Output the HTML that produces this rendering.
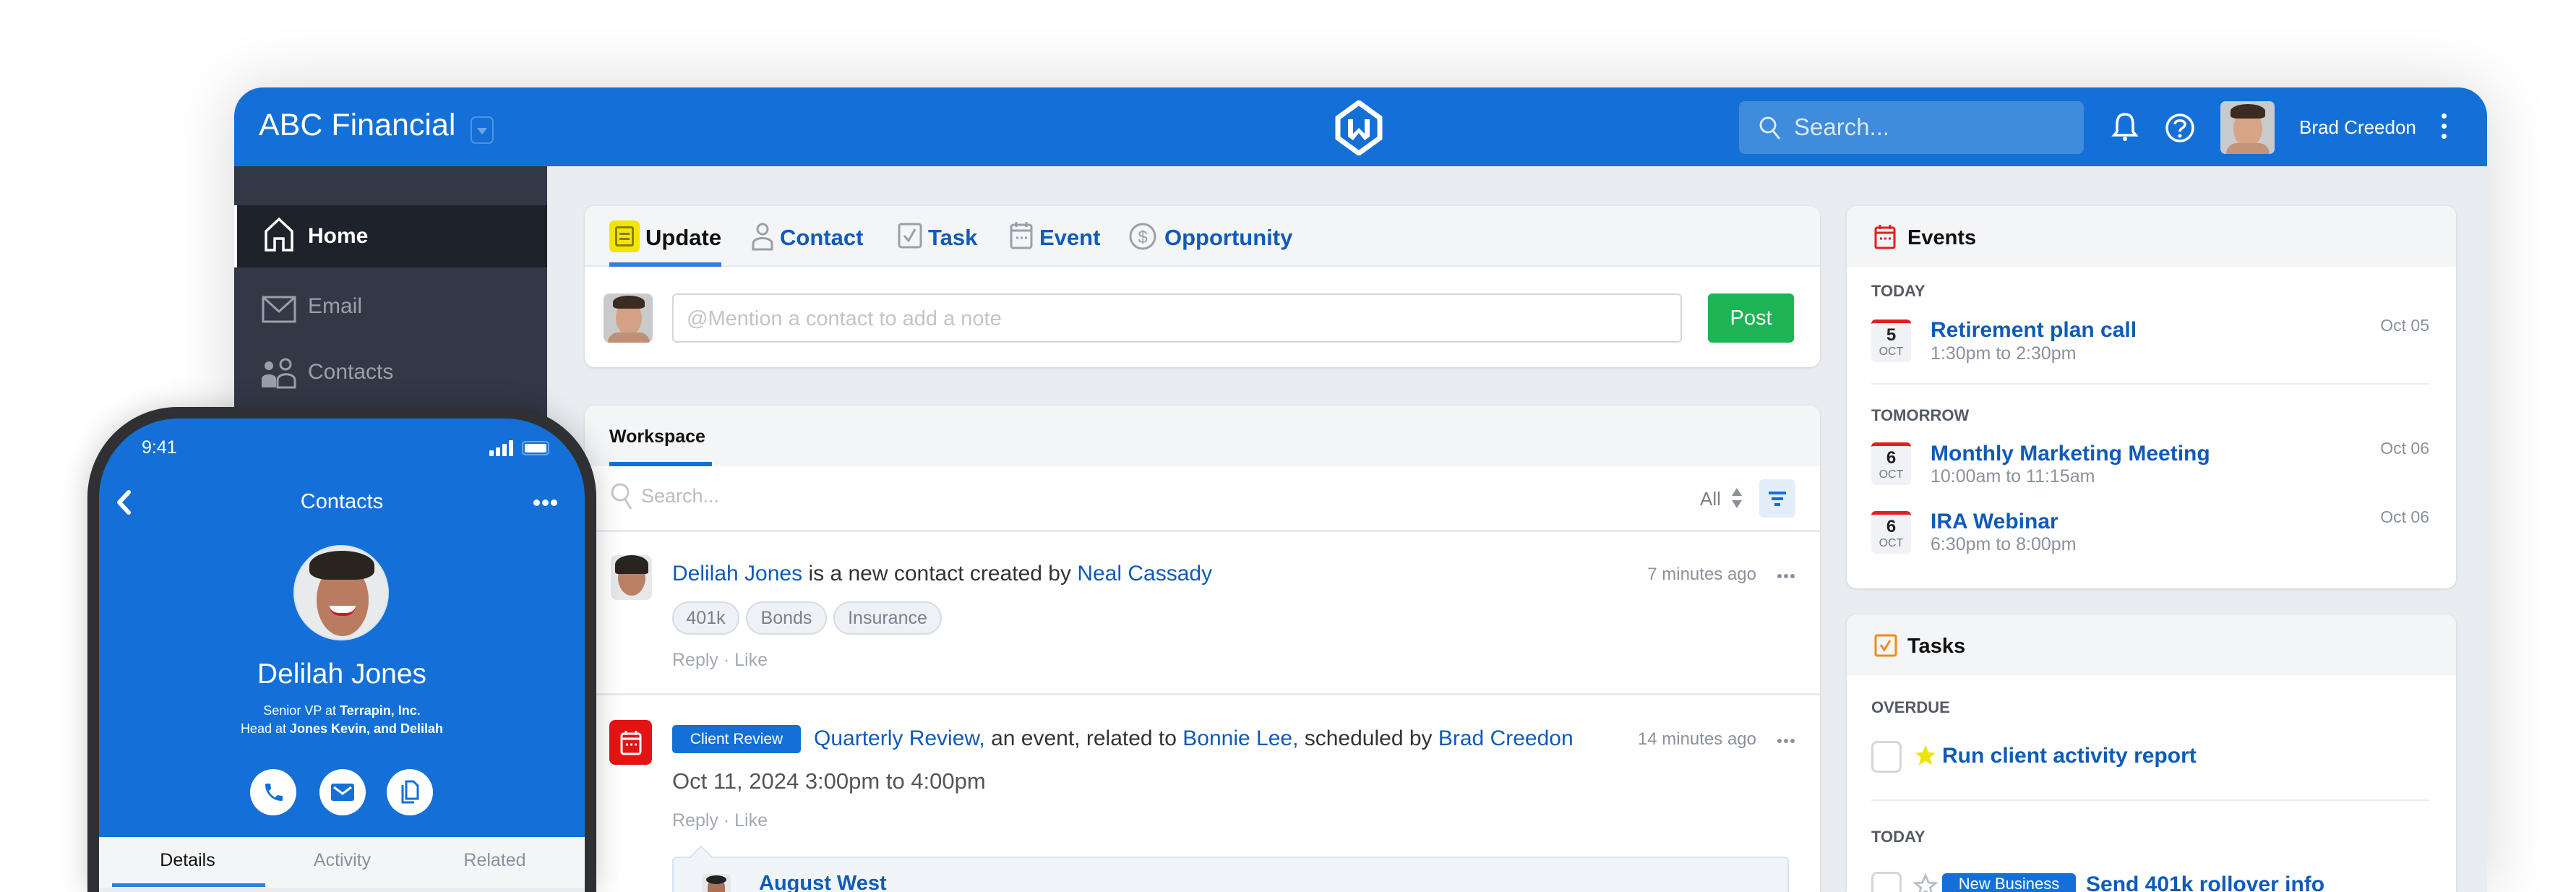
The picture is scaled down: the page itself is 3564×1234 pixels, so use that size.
<!DOCTYPE html>
<html style="width:3564px;height:1234px;overflow:hidden"><head><meta charset="utf-8">
<style>
*{box-sizing:border-box;margin:0;padding:0}
body{width:3564px;height:1234px;background:#fff;position:relative;overflow:hidden;font-family:"Liberation Sans",sans-serif}
.a{position:absolute}
.win{left:324px;top:121px;width:3117px;height:1113px;border-radius:40px 40px 0 0;background:#e9edf1;overflow:hidden;box-shadow:0 0 90px rgba(0,0,0,.16)}
.hdr{left:0;top:0;width:3117px;height:109px;background:#1470d6}
.side{left:0;top:109px;width:433px;height:1004px;background:#323846}
.card{background:#fff;border-radius:14px;box-shadow:0 1px 4px rgba(0,0,0,.12);overflow:hidden}
.ch{background:#f4f5f7}
.lk{color:#0f5bb8}
.gr{color:#8a919b}
.t{white-space:nowrap}
.tag{position:absolute;top:271px;height:46px;border:2px solid #d8dde3;background:#eef1f5;border-radius:23px;color:#7a818b;font-size:25px;line-height:42px;text-align:center}
.cal{position:absolute;left:34px;width:55px;height:59px;background:#f0f2f5;border-top:5px solid #e0201e;border-radius:6px;text-align:center}
.cal b{display:block;font-size:24px;color:#222;line-height:28px;margin-top:3px}
.cal i{display:block;font-style:normal;font-size:16px;color:#777;line-height:18px}
.sec{position:absolute;left:34px;font-size:22px;font-weight:bold;color:#555b65}
.et{position:absolute;left:116px;font-size:30px;font-weight:bold;color:#0f5bb8;white-space:nowrap}
.es{position:absolute;left:116px;font-size:25px;color:#8a919b;white-space:nowrap}
.ed{position:absolute;right:37px;font-size:23px;color:#8a919b}
.cb{position:absolute;left:34px;width:42px;height:44px;border:3px solid #d3d7dc;border-radius:8px;background:#fff}
.face{position:absolute;overflow:hidden;background:#c8cacc}
</style></head><body>

<div class="a win">
  <div class="a hdr">
    <div class="a t" style="left:34px;top:28px;font-size:43px;color:#fff">ABC Financial</div>
    <div class="a" style="left:327px;top:40px;width:32px;height:38px;border:2px solid #4d93e2;border-radius:7px"><div class="a" style="left:7px;top:14px;border-left:7px solid transparent;border-right:7px solid transparent;border-top:9px solid #6aa6ea"></div></div>
    <svg class="a" style="left:1521px;top:18px" width="70" height="76" viewBox="0 0 70 76"><path d="M35 3 L64 24 L64 52 L35 73 L6 52 L6 24 Z" fill="none" stroke="#fff" stroke-width="7"/><path d="M20 26 V50 L27 55 L35 45 L43 55 L50 50 V26 H43 V46 L35 38 L27 46 V26 Z" fill="#fff"/></svg>
    <div class="a" style="left:2082px;top:19px;width:477px;height:73px;background:#3f8bdc;border-radius:8px"></div>
    <svg class="a" style="left:2108px;top:38px" width="34" height="36" viewBox="0 0 34 36"><circle cx="14" cy="14" r="10" fill="none" stroke="#dbe8f8" stroke-width="3"/><path d="M21 22 L30 33" stroke="#dbe8f8" stroke-width="3"/></svg>
    <div class="a t" style="left:2158px;top:36px;font-size:33px;color:#dbe8f8">Search...</div>
    <svg class="a" style="left:2596px;top:33px" width="40" height="44" viewBox="0 0 40 44"><path d="M20 4 C11 4 9 11 9 18 V28 L5 33 H35 L31 28 V18 C31 11 29 4 20 4 Z" fill="none" stroke="#fff" stroke-width="3.5"/><circle cx="20" cy="38" r="3" fill="#fff"/></svg>
    <svg class="a" style="left:2670px;top:34px" width="44" height="44" viewBox="0 0 44 44"><circle cx="22" cy="22" r="18" fill="none" stroke="#fff" stroke-width="3.5"/><path d="M15 17 C15 10 29 10 29 17 C29 22 22 22 22 27" fill="none" stroke="#fff" stroke-width="3.5"/><circle cx="22" cy="33" r="2.5" fill="#fff"/></svg>
    <div class="face" style="left:2748px;top:19px;width:75px;height:73px;border-radius:7px"><div class="a" style="left:18px;top:12px;width:40px;height:52px;border-radius:50%;background:#d7a486"></div><div class="a" style="left:14px;top:4px;width:48px;height:20px;border-radius:50% 50% 20% 20%;background:#3b2b22"></div><div class="a" style="left:8px;top:58px;width:60px;height:15px;border-radius:30px 30px 0 0;background:#c49478"></div></div>
    <div class="a t" style="left:2857px;top:40px;font-size:26px;color:#fff">Brad Creedon</div>
    <div class="a" style="left:3054px;top:36px;width:7px;height:7px;border-radius:50%;background:#fff;box-shadow:0 14px 0 #fff,0 28px 0 #fff"></div>
  </div>

  <div class="a side">
    <div class="a" style="left:0;top:54px;width:433px;height:86px;background:#1e222b;border-left:4px solid #fff"></div>
    <svg class="a" style="left:40px;top:70px" width="44" height="50" viewBox="0 0 44 50"><path d="M4 46 V20 L22 3 L40 20 V46 H28 V30 H16 V46 Z" fill="none" stroke="#fff" stroke-width="3.5"/></svg>
    <div class="a t" style="left:102px;top:80px;font-size:30px;font-weight:bold;color:#fff">Home</div>
    <svg class="a" style="left:38px;top:179px" width="48" height="38" viewBox="0 0 48 38"><rect x="2" y="2" width="44" height="34" fill="none" stroke="#9aa0a8" stroke-width="3"/><path d="M2 2 L24 22 L46 2" fill="none" stroke="#9aa0a8" stroke-width="3"/></svg>
    <div class="a t" style="left:102px;top:177px;font-size:30px;color:#9aa0a8">Email</div>
    <svg class="a" style="left:38px;top:264px" width="50" height="44" viewBox="0 0 50 44"><circle cx="10" cy="12" r="6" fill="#9aa0a8"/><path d="M0 42 V30 C0 22 20 22 20 30 V42 Z" fill="#9aa0a8"/><circle cx="33" cy="10" r="7" fill="none" stroke="#9aa0a8" stroke-width="3"/><path d="M22 42 V32 C22 21 46 21 46 32 V42 Z" fill="none" stroke="#9aa0a8" stroke-width="3"/></svg>
    <div class="a t" style="left:102px;top:268px;font-size:30px;color:#9aa0a8">Contacts</div>
  </div>

  <!-- compose -->
  <div class="a card" style="left:485px;top:164px;width:1709px;height:223px">
    <div class="a ch" style="left:0;top:0;width:1709px;height:84px;border-bottom:2px solid #e6e9ed"></div>
    <div class="a" style="left:34px;top:78px;width:155px;height:6px;background:#2b7de0"></div>
    <div class="a" style="left:34px;top:20px;width:42px;height:44px;background:#f2e600;border-radius:7px"><div class="a" style="left:8px;top:8px;width:26px;height:28px;border:3px solid #8a7d00;border-radius:3px"></div><div class="a" style="left:14px;top:17px;width:14px;height:3px;background:#8a7d00;box-shadow:0 7px 0 #8a7d00"></div></div>
    <div class="a t" style="left:84px;top:26px;font-size:31px;font-weight:bold;color:#111">Update</div>
    <svg class="a" style="left:230px;top:22px" width="32" height="40" viewBox="0 0 32 40"><circle cx="16" cy="10" r="7" fill="none" stroke="#9aa0a8" stroke-width="3"/><path d="M3 38 V30 C3 20 29 20 29 30 V38 Z" fill="none" stroke="#9aa0a8" stroke-width="3"/></svg>
    <div class="a t lk" style="left:270px;top:26px;font-size:31px;font-weight:bold">Contact</div>
    <svg class="a" style="left:433px;top:22px" width="34" height="38" viewBox="0 0 34 38"><rect x="2" y="3" width="30" height="32" rx="3" fill="none" stroke="#9aa0a8" stroke-width="3"/><path d="M9 19 L15 26 L24 10" fill="none" stroke="#9aa0a8" stroke-width="3"/></svg>
    <div class="a t lk" style="left:475px;top:26px;font-size:31px;font-weight:bold">Task</div>
    <svg class="a" style="left:588px;top:20px" width="32" height="40" viewBox="0 0 32 40"><rect x="2" y="6" width="28" height="32" rx="3" fill="none" stroke="#9aa0a8" stroke-width="3"/><path d="M2 14 H30 M9 2 V9 M23 2 V9" stroke="#9aa0a8" stroke-width="3"/><path d="M9 24 H12 M15 24 H18 M21 24 H24" stroke="#9aa0a8" stroke-width="3"/></svg>
    <div class="a t lk" style="left:629px;top:26px;font-size:31px;font-weight:bold">Event</div>
    <svg class="a" style="left:752px;top:22px" width="40" height="40" viewBox="0 0 40 40"><circle cx="20" cy="20" r="17" fill="none" stroke="#9aa0a8" stroke-width="3"/><text x="20" y="29" font-family="Liberation Sans" font-size="24" fill="#9aa0a8" text-anchor="middle">$</text></svg>
    <div class="a t lk" style="left:802px;top:26px;font-size:31px;font-weight:bold">Opportunity</div>
    <div class="face" style="left:26px;top:121px;width:68px;height:68px;border-radius:8px"><div class="a" style="left:17px;top:10px;width:36px;height:48px;border-radius:50%;background:#d4a184"></div><div class="a" style="left:13px;top:3px;width:44px;height:18px;border-radius:50% 50% 20% 20%;background:#3b2b22"></div><div class="a" style="left:6px;top:54px;width:58px;height:14px;border-radius:30px 30px 0 0;background:#c08f74"></div></div>
    <div class="a" style="left:121px;top:121px;width:1397px;height:68px;border:2px solid #d3d7dc;border-radius:6px"></div>
    <div class="a t" style="left:141px;top:140px;font-size:29px;color:#c1c5cb">@Mention a contact to add a note</div>
    <div class="a" style="left:1554px;top:121px;width:119px;height:68px;background:#1cb454;border-radius:6px;color:#fff;font-size:29px;line-height:68px;text-align:center">Post</div>
  </div>

  <!-- workspace -->
  <div class="a card" style="left:485px;top:440px;width:1709px;height:673px;border-radius:14px 14px 0 0">
    <div class="a ch" style="left:0;top:0;width:1709px;height:84px"></div>
    <div class="a t" style="left:34px;top:29px;font-size:25px;font-weight:bold;color:#111">Workspace</div>
    <div class="a" style="left:34px;top:78px;width:142px;height:6px;background:#1470d6"></div>
    <svg class="a" style="left:34px;top:105px" width="36" height="42" viewBox="0 0 36 42"><circle cx="15" cy="15" r="11" fill="none" stroke="#c4c8ce" stroke-width="3"/><path d="M22 25 L30 38" stroke="#c4c8ce" stroke-width="3"/></svg>
    <div class="a t" style="left:78px;top:110px;font-size:27px;color:#b8bdc4">Search...</div>
    <div class="a t" style="left:1543px;top:114px;font-size:26px;color:#7a818b">All</div>
    <svg class="a" style="left:1585px;top:112px" width="18" height="32" viewBox="0 0 18 32"><path d="M9 2 L16 13 H2 Z M9 30 L16 19 H2 Z" fill="#8a919b"/></svg>
    <div class="a" style="left:1625px;top:102px;width:50px;height:53px;background:#e3eefb;border-radius:6px"><div class="a" style="left:13px;top:17px;width:24px;height:4px;background:#1470d6"></div><div class="a" style="left:17px;top:25px;width:16px;height:4px;background:#1470d6"></div><div class="a" style="left:21px;top:33px;width:8px;height:4px;background:#1470d6"></div></div>
    <div class="a" style="left:0;top:172px;width:1709px;height:3px;background:#e8ebef"></div>

    <div class="face" style="left:36px;top:207px;width:57px;height:62px;border-radius:8px;background:#e6e8ea"><div class="a" style="left:10px;top:6px;width:38px;height:50px;border-radius:50%;background:#b98064"></div><div class="a" style="left:6px;top:0;width:46px;height:26px;border-radius:50% 50% 10% 10%;background:#2a2420"></div></div>
    <div class="a t" style="left:121px;top:216px;font-size:30px;color:#333"><span class="lk">Delilah Jones</span> is a new contact created by <span class="lk">Neal Cassady</span></div>
    <div class="a t gr" style="right:88px;top:220px;font-size:24px">7 minutes ago</div>
    <div class="a" style="left:1650px;top:233px;width:6px;height:6px;border-radius:50%;background:#8a919b;box-shadow:9px 0 0 #8a919b,18px 0 0 #8a919b"></div>
    <div class="tag" style="left:121px;width:93px">401k</div>
    <div class="tag" style="left:223px;width:112px">Bonds</div>
    <div class="tag" style="left:344px;width:150px">Insurance</div>
    <div class="a t" style="left:121px;top:338px;font-size:25px;color:#a3a9b1">Reply · Like</div>
    <div class="a" style="left:0;top:398px;width:1709px;height:3px;background:#e8ebef"></div>

    <div class="a" style="left:34px;top:435px;width:59px;height:62px;background:#e41414;border-radius:8px"><svg class="a" style="left:15px;top:13px" width="30" height="36" viewBox="0 0 30 36"><rect x="2" y="6" width="26" height="28" rx="3" fill="none" stroke="#fff" stroke-width="3"/><path d="M2 13 H28 M8 2 V8 M22 2 V8 M8 21 H11 M14 21 H17 M20 21 H23" stroke="#fff" stroke-width="3"/></svg></div>
    <div class="a" style="left:121px;top:442px;width:178px;height:39px;background:#1470d6;border-radius:5px;color:#fff;font-size:21px;line-height:39px;text-align:center">Client Review</div>
    <div class="a t" style="left:317px;top:444px;font-size:30px;color:#333"><span class="lk">Quarterly Review,</span> an event, related to <span class="lk">Bonnie Lee,</span> scheduled by <span class="lk">Brad Creedon</span></div>
    <div class="a t gr" style="right:88px;top:448px;font-size:24px">14 minutes ago</div>
    <div class="a" style="left:1650px;top:461px;width:6px;height:6px;border-radius:50%;background:#8a919b;box-shadow:9px 0 0 #8a919b,18px 0 0 #8a919b"></div>
    <div class="a t" style="left:121px;top:502px;font-size:31px;color:#555">Oct 11, 2024 3:00pm to 4:00pm</div>
    <div class="a t" style="left:121px;top:560px;font-size:25px;color:#a3a9b1">Reply · Like</div>
    <div class="a" style="left:121px;top:624px;width:1545px;height:49px;background:#f1f5fa;border:2px solid #d6e3f2;border-bottom:none;border-radius:6px 6px 0 0"></div>
    <div class="a" style="left:150px;top:613px;width:22px;height:22px;background:#f1f5fa;border-left:2px solid #d6e3f2;border-top:2px solid #d6e3f2;transform:rotate(45deg)"></div>
    <div class="face" style="left:162px;top:648px;width:40px;height:25px;border-radius:6px 6px 0 0;background:#e6e8ea"><div class="a" style="left:8px;top:6px;width:24px;height:19px;border-radius:12px 12px 0 0;background:#a87158"></div><div class="a" style="left:6px;top:2px;width:28px;height:12px;border-radius:50%;background:#222"></div></div>
    <div class="a t lk" style="left:241px;top:650px;font-size:29px;font-weight:bold;line-height:23px;height:23px;overflow:hidden">August West</div>
  </div>

  <!-- events -->
  <div class="a card" style="left:2231px;top:164px;width:843px;height:529px">
    <div class="a ch" style="left:0;top:0;width:843px;height:84px"></div>
    <svg class="a" style="left:38px;top:24px" width="30" height="36" viewBox="0 0 30 36"><rect x="2" y="6" width="26" height="28" rx="2" fill="none" stroke="#e0201e" stroke-width="3"/><path d="M2 13 H28 M8 2 V8 M22 2 V8 M8 21 H11 M14 21 H17 M20 21 H23" stroke="#e0201e" stroke-width="3"/></svg>
    <div class="a t" style="left:84px;top:28px;font-size:29px;font-weight:bold;color:#111">Events</div>
    <div class="sec" style="top:105px">TODAY</div>
    <div class="cal" style="top:157px"><b>5</b><i>OCT</i></div>
    <div class="et" style="top:155px">Retirement plan call</div>
    <div class="es" style="top:190px">1:30pm to 2:30pm</div>
    <div class="ed" style="top:152px">Oct 05</div>
    <div class="a" style="left:34px;top:245px;width:772px;height:2px;background:#e8ebef"></div>
    <div class="sec" style="top:277px">TOMORROW</div>
    <div class="cal" style="top:327px"><b>6</b><i>OCT</i></div>
    <div class="et" style="top:326px">Monthly Marketing Meeting</div>
    <div class="es" style="top:360px">10:00am to 11:15am</div>
    <div class="ed" style="top:322px">Oct 06</div>
    <div class="cal" style="top:422px"><b>6</b><i>OCT</i></div>
    <div class="et" style="top:420px">IRA Webinar</div>
    <div class="es" style="top:454px">6:30pm to 8:00pm</div>
    <div class="ed" style="top:417px">Oct 06</div>
  </div>

  <!-- tasks -->
  <div class="a card" style="left:2231px;top:729px;width:843px;height:384px;border-radius:14px 14px 0 0">
    <div class="a ch" style="left:0;top:0;width:843px;height:84px"></div>
    <svg class="a" style="left:38px;top:27px" width="32" height="32" viewBox="0 0 32 32"><rect x="2" y="2" width="28" height="28" rx="2" fill="none" stroke="#f08a1c" stroke-width="3"/><path d="M9 15 L14 22 L22 9" fill="none" stroke="#f08a1c" stroke-width="3"/></svg>
    <div class="a t" style="left:84px;top:28px;font-size:29px;font-weight:bold;color:#111">Tasks</div>
    <div class="sec" style="top:116px">OVERDUE</div>
    <div class="cb" style="top:175px"></div>
    <svg class="a" style="left:92px;top:178px" width="34" height="34" viewBox="0 0 24 24"><path d="M12 2 L15 9 L22 9.5 L16.5 14 L18.5 21.5 L12 17.5 L5.5 21.5 L7.5 14 L2 9.5 L9 9 Z" fill="#ece40e"/></svg>
    <div class="a t lk" style="left:132px;top:179px;font-size:30px;font-weight:bold">Run client activity report</div>
    <div class="a" style="left:34px;top:256px;width:772px;height:2px;background:#e8ebef"></div>
    <div class="sec" style="top:295px">TODAY</div>
    <div class="cb" style="top:356px;height:28px;border-bottom:none;border-radius:8px 8px 0 0"></div>
    <svg class="a" style="left:92px;top:358px" width="34" height="26" viewBox="0 0 24 18"><path d="M12 2 L15 9 L22 9.5 L16.5 14 L18.5 21.5 L12 17.5 L5.5 21.5 L7.5 14 L2 9.5 L9 9 Z" fill="none" stroke="#b8bdc4" stroke-width="2"/></svg>
    <div class="a" style="left:132px;top:358px;width:185px;height:26px;background:#1470d6;border-radius:6px 6px 0 0;color:#fff;font-size:22px;line-height:30px;text-align:center;overflow:hidden">New Business</div>
    <div class="a t lk" style="left:331px;top:360px;font-size:30px;font-weight:bold;line-height:24px;height:24px;overflow:hidden;padding-top:2px">Send 401k rollover info</div>
  </div>
</div>

<!-- phone -->
<div class="a" style="left:121px;top:563px;width:704px;height:671px;background:#2f3033;border-radius:125px 125px 0 0;box-shadow:0 0 40px rgba(0,0,0,.2)"></div>
<div class="a" style="left:137px;top:579px;width:672px;height:655px;background:#1470d6;border-radius:110px 110px 0 0;overflow:hidden">
  <div class="a t" style="left:59px;top:26px;font-size:25px;color:#fff">9:41</div>
  <div class="a" style="left:540px;top:44px;width:6px;height:8px;background:#fff;border-radius:1px"></div>
  <div class="a" style="left:549px;top:40px;width:6px;height:12px;background:#fff;border-radius:1px"></div>
  <div class="a" style="left:558px;top:35px;width:6px;height:17px;background:#fff;border-radius:1px"></div>
  <div class="a" style="left:567px;top:30px;width:6px;height:22px;background:#fff;border-radius:1px"></div>
  <div class="a" style="left:585px;top:31px;width:38px;height:20px;border:2px solid #6aa6ea;border-radius:5px;padding:2px"><div style="width:100%;height:100%;background:#fff;border-radius:2px"></div></div>
  <svg class="a" style="left:22px;top:98px" width="24" height="36" viewBox="0 0 24 36"><path d="M19 4 L6 18 L19 32" fill="none" stroke="#fff" stroke-width="6" stroke-linecap="round" stroke-linejoin="round"/></svg>
  <div class="a t" style="left:0;width:672px;text-align:center;top:99px;font-size:29px;color:#fff">Contacts</div>
  <div class="a" style="left:601px;top:112px;width:9px;height:9px;border-radius:50%;background:#fff;box-shadow:12px 0 0 #fff,24px 0 0 #fff"></div>
  <div class="a" style="left:269px;top:175px;width:132px;height:132px;border-radius:50%;background:#e8eaec;overflow:hidden;border:2px solid #d5e4f5"><div class="a" style="left:30px;top:24px;width:72px;height:100px;border-radius:50%;background:#b97c60"></div><div class="a" style="left:20px;top:6px;width:90px;height:40px;border-radius:50% 50% 30% 30%;background:#2a2420"></div><div class="a" style="left:48px;top:82px;width:36px;height:14px;border-radius:0 0 18px 18px;background:#fff;border-bottom:4px solid #c41f2a"></div></div>
  <div class="a t" style="left:0;width:672px;text-align:center;top:332px;font-size:39px;color:#fff">Delilah Jones</div>
  <div class="a t" style="left:0;width:672px;text-align:center;top:394px;font-size:18px;color:#fff">Senior VP at <b>Terrapin, Inc.</b></div>
  <div class="a t" style="left:0;width:672px;text-align:center;top:419px;font-size:18px;color:#fff">Head at <b>Jones Kevin, and Delilah</b></div>
  <div class="a" style="left:209px;top:485px;width:64px;height:64px;border-radius:50%;background:#fff"><svg class="a" style="left:17px;top:16px" width="32" height="32" viewBox="0 0 24 24"><path d="M6.6 10.8c1.4 2.8 3.8 5.1 6.6 6.6l2.2-2.2c.3-.3.7-.4 1-.2 1.1.4 2.3.6 3.6.6.6 0 1 .4 1 1V20c0 .6-.4 1-1 1C10.6 21 3 13.4 3 4c0-.6.4-1 1-1h3.5c.6 0 1 .4 1 1 0 1.3.2 2.5.6 3.6.1.3 0 .7-.2 1L6.6 10.8z" fill="#1470d6"/></svg></div>
  <div class="a" style="left:305px;top:485px;width:64px;height:64px;border-radius:50%;background:#fff"><svg class="a" style="left:14px;top:18px" width="36" height="28" viewBox="0 0 36 28"><rect x="2" y="2" width="32" height="24" rx="3" fill="#1470d6"/><path d="M6 7 L18 16 L30 7" fill="none" stroke="#fff" stroke-width="3"/></svg></div>
  <div class="a" style="left:398px;top:485px;width:64px;height:64px;border-radius:50%;background:#fff"><svg class="a" style="left:18px;top:14px" width="28" height="36" viewBox="0 0 28 36"><path d="M4 8 V32 H20" fill="none" stroke="#1470d6" stroke-width="3"/><path d="M9 3 H19 L25 9 V27 H9 Z" fill="none" stroke="#1470d6" stroke-width="3"/></svg></div>
  <div class="a" style="left:0;top:579px;width:672px;height:70px;background:#f4f5f7"></div>
  <div class="a t" style="left:0;width:245px;text-align:center;top:597px;font-size:25px;color:#111">Details</div>
  <div class="a t" style="left:214px;width:245px;text-align:center;top:597px;font-size:25px;color:#8a919b">Activity</div>
  <div class="a t" style="left:425px;width:245px;text-align:center;top:597px;font-size:25px;color:#8a919b">Related</div>
  <div class="a" style="left:18px;top:643px;width:212px;height:5px;background:#2b7de0"></div>
  <div class="a" style="left:0;top:649px;width:672px;height:6px;background:#e9edf1"></div>
</div>
</body></html>
